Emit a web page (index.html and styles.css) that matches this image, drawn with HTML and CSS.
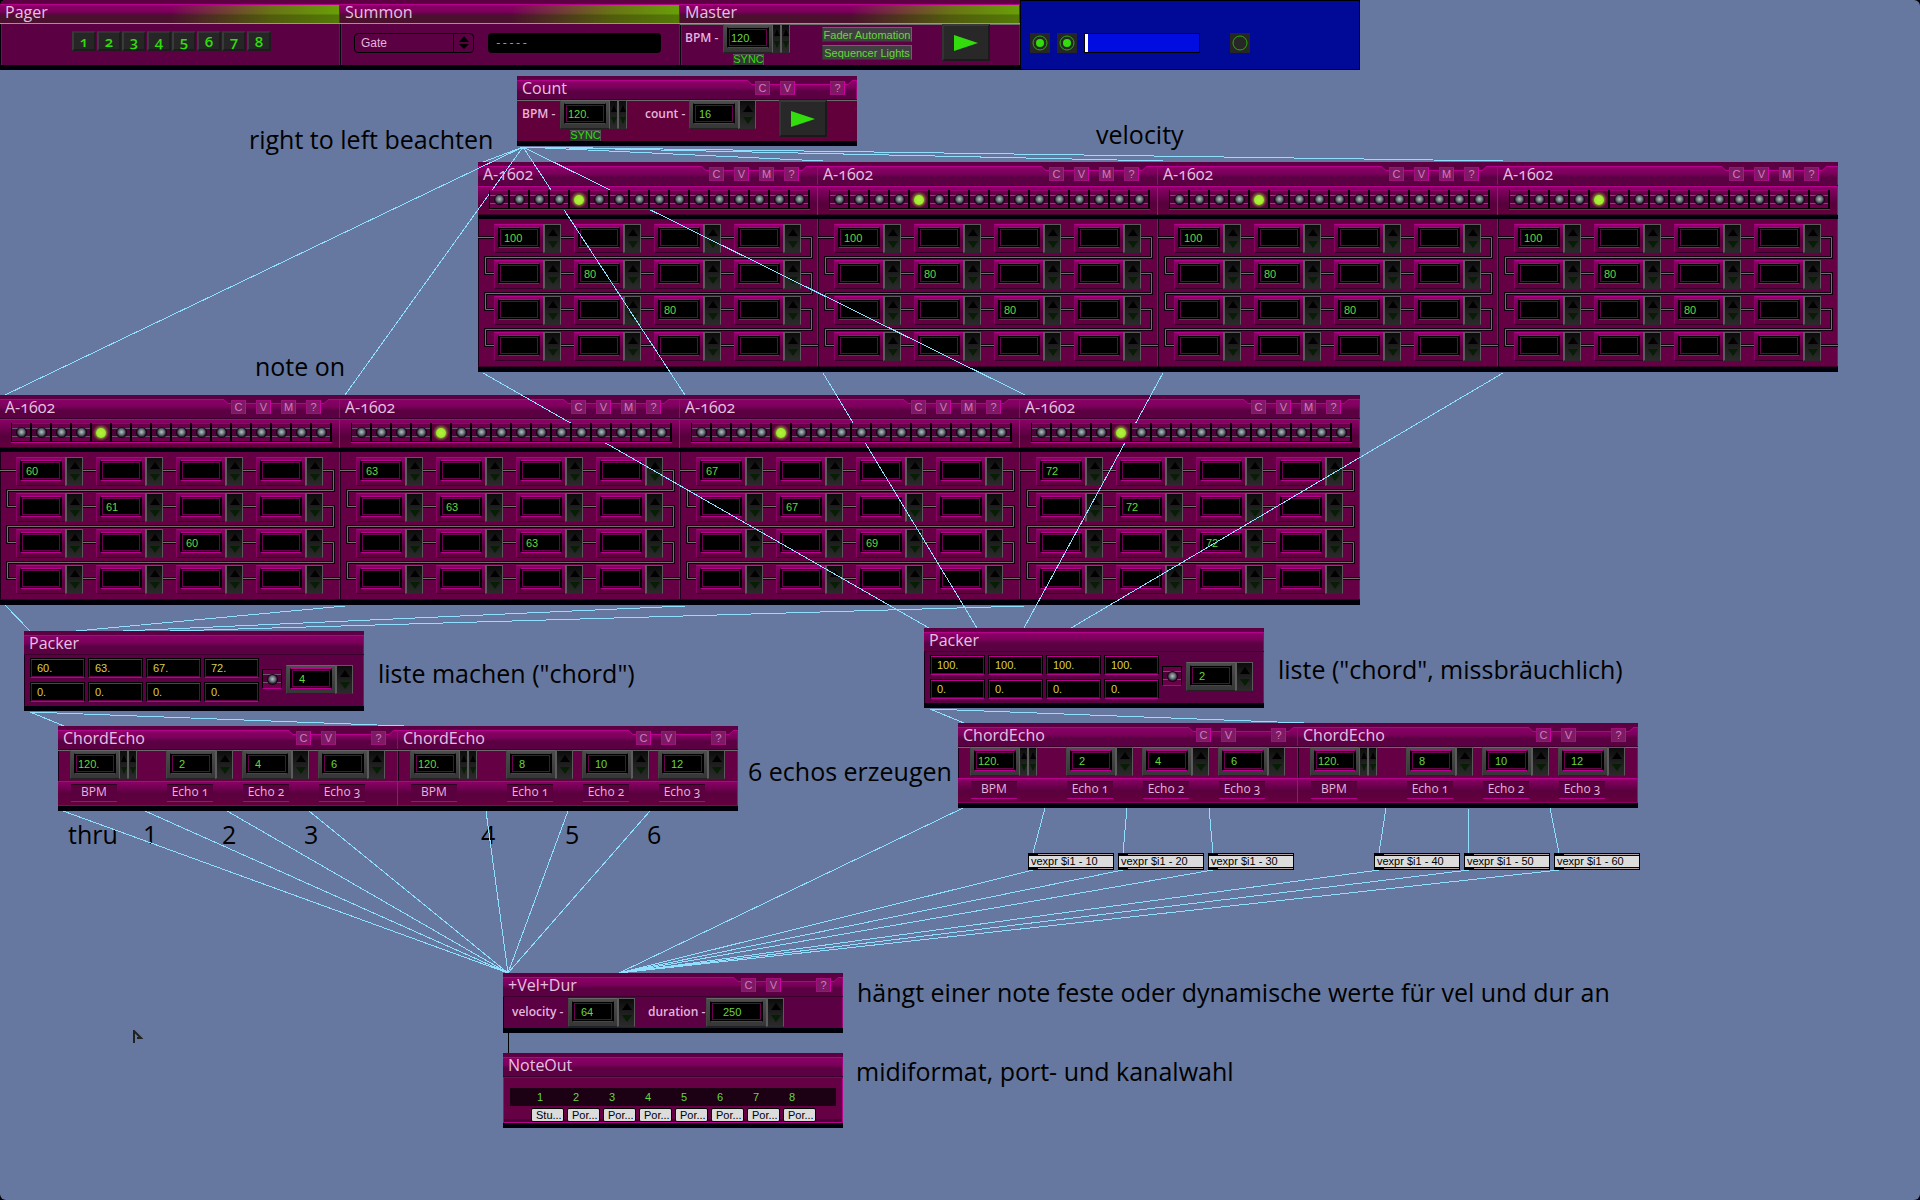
FILE: index.html
```html
<!DOCTYPE html>
<html lang="de">
<head>
<meta charset="utf-8">
<title>Patch</title>
<link rel="stylesheet" href="styles.css">
</head>
<body>
<main class="patch">

  <div class="node rack rack-top">
    <section class="module top">
      <header class="head"><h2>Pager</h2></header>
      <div class="body pager">
        <button class="page">1</button><button class="page">2</button><button class="page">3</button><button class="page">4</button><button class="page">5</button><button class="page">6</button><button class="page">7</button><button class="page">8</button>
      </div>
    </section>
    <section class="module top">
      <header class="head"><h2>Summon</h2></header>
      <div class="body summon">
        <div class="picker">
          <select class="gate" aria-label="Module"><option>Gate</option></select>
          <svg class="updown" viewBox="0 0 10 14" width="10" height="14" aria-hidden="true"><path d="M5 0L10 6H0zM5 13L10 8H0z"/></svg>
        </div>
        <input class="slot" aria-label="Slot" value="-----">
      </div>
    </section>
    <section class="module top">
      <header class="head"><h2>Master</h2></header>
      <div class="body transport">
        <label for="master-bpm">BPM -</label>
        <div class="tempo">
          <div class="num gray tight" data-steppers="2"><input id="master-bpm" value="120."></div>
          <button class="sync">SYNC</button>
        </div>
        <div class="options">
          <button class="option">Fader Automation</button>
          <button class="option">Sequencer Lights</button>
        </div>
        <button class="play" aria-label="Play"><svg viewBox="0 0 24 16" width="24" height="16"><path d="M0 0L24 8L0 16z"/></svg></button>
      </div>
    </section>
    <section class="module recorder">
      <button class="round" aria-label="Record"><svg viewBox="0 0 20 20" width="20" height="20"><ellipse class="ring" cx="10" cy="10" rx="7" ry="7"/><circle class="dot" cx="10" cy="10" r="4"/></svg></button>
      <button class="round" aria-label="Loop"><svg viewBox="0 0 20 20" width="20" height="20"><ellipse class="ring" cx="10" cy="10" rx="7" ry="7"/><circle class="dot" cx="10" cy="10" r="4"/></svg></button>
      <input class="position" type="range" min="0" max="100" value="0" aria-label="Position">
      <button class="round last" aria-label="Off"><svg viewBox="0 0 20 20" width="20" height="20"><ellipse class="ring" cx="10" cy="10" rx="7" ry="7"/></svg></button>
    </section>
  </div>

  <section class="node module count">
    <header class="head" data-tabs="CV?"><h2>Count</h2></header>
    <div class="body transport">
      <label for="count-bpm">BPM -</label>
      <div class="tempo">
        <div class="num gray tight" data-steppers="2"><input id="count-bpm" value="120."></div>
        <button class="sync">SYNC</button>
      </div>
      <label class="second" for="count-n">count -</label>
      <div class="num gray"><input id="count-n" value="16"></div>
      <button class="play" aria-label="Play"><svg viewBox="0 0 24 16" width="24" height="16"><path d="M0 0L24 8L0 16z"/></svg></button>
    </div>
  </section>

  <div class="node rack rack-velocity">
    <section class="module seq" data-steps="100,80,80"></section>
    <section class="module seq" data-steps="100,80,80"></section>
    <section class="module seq" data-steps="100,80,80"></section>
    <section class="module seq" data-steps="100,80,80"></section>
  </div>

  <div class="node rack rack-notes">
    <section class="module seq" data-steps="60,61,60"></section>
    <section class="module seq" data-steps="63,63,63"></section>
    <section class="module seq" data-steps="67,67,69"></section>
    <section class="module seq" data-steps="72,72,72"></section>
  </div>

  <section class="node module packer packer-notes">
    <header class="head"><h2>Packer</h2></header>
    <div class="body">
      <div class="list">
        <input aria-label="Item 1" value="60."><input aria-label="Item 2" value="63."><input aria-label="Item 3" value="67."><input aria-label="Item 4" value="72.">
        <input aria-label="Item 5" value="0."><input aria-label="Item 6" value="0."><input aria-label="Item 7" value="0."><input aria-label="Item 8" value="0.">
      </div>
      <button class="led" aria-label="Send"></button>
      <div class="num gray wide"><input aria-label="Length" value="4"></div>
    </div>
  </section>

  <section class="node module packer packer-velocity">
    <header class="head"><h2>Packer</h2></header>
    <div class="body">
      <div class="list">
        <input aria-label="Item 1" value="100."><input aria-label="Item 2" value="100."><input aria-label="Item 3" value="100."><input aria-label="Item 4" value="100.">
        <input aria-label="Item 5" value="0."><input aria-label="Item 6" value="0."><input aria-label="Item 7" value="0."><input aria-label="Item 8" value="0.">
      </div>
      <button class="led" aria-label="Send"></button>
      <div class="num gray wide"><input aria-label="Length" value="2"></div>
    </div>
  </section>

  <div class="node rack echo-notes">
    <section class="module echo" data-values="120.,2,4,6"></section>
    <section class="module echo" data-values="120.,8,10,12"></section>
  </div>
  <div class="node rack echo-velocity">
    <section class="module echo" data-values="120.,2,4,6"></section>
    <section class="module echo" data-values="120.,8,10,12"></section>
  </div>

  <div class="node exprs exprs-a">
    <div class="expr">vexpr $i1 - 10</div><div class="expr">vexpr $i1 - 20</div><div class="expr">vexpr $i1 - 30</div>
  </div>
  <div class="node exprs exprs-b">
    <div class="expr">vexpr $i1 - 40</div><div class="expr">vexpr $i1 - 50</div><div class="expr">vexpr $i1 - 60</div>
  </div>

  <section class="node module veldur">
    <header class="head" data-tabs="CV?"><h2>+Vel+Dur</h2></header>
    <div class="body">
      <label for="vel">velocity -</label>
      <div class="num gray wide"><input id="vel" value="64"></div>
      <label for="dur" class="second">duration -</label>
      <div class="num gray long"><input id="dur" value="250"></div>
    </div>
  </section>

  <section class="node module noteout">
    <header class="head"><h2>NoteOut</h2></header>
    <div class="body">
      <div class="channels"><label for="p1">1</label><label for="p2">2</label><label for="p3">3</label><label for="p4">4</label><label for="p5">5</label><label for="p6">6</label><label for="p7">7</label><label for="p8">8</label></div>
      <div class="ports">
        <select id="p1"><option>Stu...</option></select><select id="p2"><option>Por...</option></select><select id="p3"><option>Por...</option></select><select id="p4"><option>Por...</option></select><select id="p5"><option>Por...</option></select><select id="p6"><option>Por...</option></select><select id="p7"><option>Por...</option></select><select id="p8"><option>Por...</option></select>
      </div>
    </div>
  </section>

  <p class="node note n-order">right to left beachten</p>
  <p class="node note n-velocity">velocity</p>
  <p class="node note n-noteon">note on</p>
  <p class="node note n-list">liste machen ("chord")</p>
  <p class="node note n-list2">liste ("chord", missbräuchlich)</p>
  <p class="node note n-echo">6 echos erzeugen</p>
  <p class="node note n-thru">thru</p>
  <p class="node note n-1">1</p>
  <p class="node note n-2">2</p>
  <p class="node note n-3">3</p>
  <p class="node note n-4">4</p>
  <p class="node note n-5">5</p>
  <p class="node note n-6">6</p>
  <p class="node note n-veldur">hängt einer note feste oder dynamische werte für vel und dur an</p>
  <p class="node note n-out">midiformat, port- und kanalwahl</p>

  <svg class="cables" aria-hidden="true">
    <!-- clock to both sequencer rows -->
    <path d="M523 147L5 395M523 147L345 395M523 147L685 395M523 147L1025 395M523 147L483 162M523 147L823 161M523 147L1163 161M523 147L1503 161"/>
    <!-- sequencers to packers -->
    <path d="M483 373L929 628M823 373L977 628M1163 373L1024 628M1503 373L1071 628"/>
    <path d="M5 605L30 631M345 606L76 631M685 606L123 631M1025 606L170 631"/>
    <!-- packers to echoes -->
    <path d="M30 712L64 726M30 712L404 726M930 709L964 723M930 709L1304 723"/>
    <!-- echoes to velocity / duration -->
    <path d="M63 811L508 973M145 811L508 973M227 811L508 973M309 811L508 973M486 811L508 973M568 811L508 973M650 811L508 973"/>
    <path d="M963 808L619 973M1045 808L1033 853M1127 808L1123 853M1209 808L1213 853M1386 808L1379 853M1468 808L1469 853M1550 808L1559 853"/>
    <path d="M1033 870L619 973M1123 870L619 973M1213 870L619 973M1379 870L619 973M1469 870L619 973M1559 870L619 973"/>
    <path class="out" d="M508 1033V1053"/>
  </svg>
  <svg class="node pointer" viewBox="0 0 10 14" width="10" height="14" aria-hidden="true"><path d="M1 13V1L8 8H4"/></svg>
</main>
<script src="patch.js"></script>
</body>
</html>
```
FILE: patch.js
```js
const stepper = '<span class="stepper"><button aria-label="Up"></button><button aria-label="Down"></button></span>';

function head(title, tabs) {
  return `<header class="head" data-tabs="${tabs}"><h2>${title}</h2></header>`;
}

document.querySelectorAll('.seq').forEach(el => {
  const values = el.dataset.steps.split(',');
  let leds = '', cells = '';
  for (let i = 0; i < 16; i++) {
    leds += `<button class="led${i === 4 ? ' on' : ''}" aria-label="Step ${i + 1}"></button>`;
    // the three values sit on the diagonal of the 4 x 4 grid
    const value = i % 5 === 0 && i < 15 ? values[i / 5] : '';
    cells += `<div class="num"><input aria-label="Value ${i + 1}" value="${value}"></div>`;
  }
  el.innerHTML = head('A-1602', 'CVM?') +
    `<div class="lights"><div class="tray">${leds}</div></div>
     <div class="body"><svg class="wire" width="340" height="148" viewBox="0 0 340 148">
     ${['shade', 'core'].map(c => `<path class="${c}" d="M0 18.5H333.5V38.5H7.5V54.5H333.5V74.5H7.5V90.5H333.5V110.5H7.5V126.5H340"/>`).join('')}
     </svg><div class="cells">${cells}</div></div>`;
});

document.querySelectorAll('.echo').forEach(el => {
  const names = ['BPM', 'Echo 1', 'Echo 2', 'Echo 3'];
  const nums = el.dataset.values.split(',').map((v, i) =>
    `<div class="num gray ${i ? 'wide' : 'tight'}" data-steppers="${i ? 1 : 2}"><input aria-label="${names[i]}" value="${v}"></div>`).join('');
  el.innerHTML = head('ChordEcho', 'CV?') +
    `<div class="body"><div class="row">${nums}</div></div>
     <div class="captions row">${names.map(n => `<span>${n}</span>`).join('')}</div>`;
});

document.querySelectorAll('.num').forEach(el => {
  el.querySelector('input').insertAdjacentHTML('beforebegin', '<span class="face"></span>');
  el.querySelector('.face').append(el.querySelector('input'));
  const n = Number(el.dataset.steppers || 1);
  if (n === 2) el.classList.add('double');
  el.insertAdjacentHTML('beforeend', stepper.repeat(n));
});

document.querySelectorAll('.head[data-tabs]').forEach(el => {
  const tabs = [...el.dataset.tabs].map(t => `<button>${t}</button>`).join('');
  el.insertAdjacentHTML('beforeend',
    `<div class="tabs"><svg width="106" height="6" viewBox="0 0 106 6"><path d="M0 0L5 4.5H101L106 0"/></svg>${tabs}</div>`);
});
```
FILE: styles.css
```css
:root {
  --pink: #b8008f;
  --plum: #640043;
  --green: #68d63e;
  --title: "Open Sans", "Noto Sans", sans-serif;
  --small: "Liberation Sans", Arial, sans-serif;
}
* { box-sizing: border-box; }
body { margin: 0; background: #000; }
button, input, select { margin: 0; padding: 0; border: 0; border-radius: 0; background: none; font: 11px/12px var(--small); color: inherit; outline: 0; appearance: none; }
button { display: flex; align-items: center; justify-content: center; }

.patch { position: relative; min-height: 100vh; min-width: 1860px; background: #6678a0; border-radius: 6px; overflow: hidden; }
.node { position: absolute; }
.rack { display: flex; }
.cables { position: absolute; inset: 0; width: 100%; height: 100%; z-index: 1; pointer-events: none; fill: none; stroke: #8fe0ff; shape-rendering: crispEdges; }
.cables .out { stroke: #000; }

/* positions on the canvas */
.rack-top { left: 0; top: 0; }
.count { left: 517px; top: 76px; }
.rack-velocity { left: 478px; top: 162px; }
.rack-notes { left: 0; top: 395px; }
.packer-notes { left: 24px; top: 631px; }
.packer-velocity { left: 924px; top: 628px; }
.echo-notes { left: 58px; top: 726px; }
.echo-velocity { left: 958px; top: 723px; }
.exprs-a { left: 1028px; top: 853px; }
.exprs-b { left: 1374px; top: 853px; }
.veldur { left: 503px; top: 973px; }
.noteout { left: 503px; top: 1053px; }
.pointer { left: 133px; top: 1030px; fill: none; stroke: #222; stroke-width: 2; }

/* comments */
.note { margin: 0; font: 25px/30px var(--title); color: #000; white-space: nowrap; }
.n-order { left: 249px; top: 124px; }
.n-velocity { left: 1096px; top: 119px; }
.n-noteon { left: 255px; top: 351px; }
.n-list { left: 378px; top: 658px; }
.n-list2 { left: 1278px; top: 654px; }
.n-echo { left: 748px; top: 756px; }
.n-thru, .n-1, .n-2, .n-3, .n-4, .n-5, .n-6 { top: 819px; }
.n-thru { left: 68px; }
.n-1 { left: 143px; }
.n-2 { left: 222px; }
.n-3 { left: 304px; }
.n-4 { left: 481px; }
.n-5 { left: 565px; }
.n-6 { left: 647px; }
.n-veldur { left: 857px; top: 977px; }
.n-out { left: 856px; top: 1056px; }

/* module frame */
.module { width: 340px; background: var(--plum); border-bottom: 5px solid #00000a; box-shadow: inset 1px 0 #1a0018, inset -1px 0 #a0007a; color: #e6b4dc; }
.head { height: 24px; padding-left: 5px; display: flex; justify-content: space-between; border-top: 4px solid #5c0043; border-bottom: 1px solid #3c002c; background: linear-gradient(#8c0069, #7a005a 40%, #5a0043 60%, #5a0043); box-shadow: inset 0 1px var(--pink), inset -1px 0 #a0007a; }
.head h2 { margin: 0; font: 16px/17px var(--title); font-variant-numeric: oldstyle-nums; color: #e8c0e0; }
.tabs { position: relative; width: 106px; height: 15px; margin-right: 4px; padding: 1px 8px 0; display: flex; gap: 10px; }
.tabs svg { position: absolute; left: 0; top: 0; fill: #5c0043; stroke: var(--pink); }
.tabs button { position: relative; width: 15px; height: 14px; background: #7d1a64; border: 1px solid #a0107c; border-right-color: #d000a8; color: #d878c0; }
.tabs button:last-child { margin-left: auto; }

/* top bar */
.top { height: 70px; background: #5a0043; box-shadow: inset 1px 0 #00000a, inset 2px 0 #8a0066, inset -1px 0 #8a0066; }
.top .head { border-bottom-color: #7fc000; background: linear-gradient(#0000 50%, #2a300055 60%), linear-gradient(90deg, #6a960000 50%, #66850add 80%, #68a008), linear-gradient(#8c0069, #7a005a 40%, #5a0043 60%, #5a0043); }
.pager { display: flex; gap: 1px; padding: 7px 0 0 72px; }
.page { width: 24px; height: 20px; background: #262626; border: 2px solid #1c1c1c; border-top-color: #333; border-left-color: #3a3a3a; font: 600 15px/16px var(--title); font-variant-numeric: oldstyle-nums; color: #33dc0c; }
.summon { display: flex; gap: 14px; padding: 9px 0 0 14px; }
.picker { position: relative; width: 120px; }
.gate { width: 100%; height: 20px; padding-left: 6px; border: 1px solid #000; border-radius: 4px; font-size: 12px; }
.updown { position: absolute; right: 0; top: 1px; width: 21px; height: 18px; padding: 2px 5px; border-left: 1px solid #000; fill: #000; }
.slot { width: 173px; height: 20px; padding-left: 7px; background: #000; border-radius: 4px; color: var(--green); font-family: "Liberation Mono", monospace; }
.recorder { display: flex; height: 70px; padding: 32px 0 0 9px; background: #000a96; border: 1px solid #000; box-shadow: none; }
.round { width: 20px; height: 20px; margin-right: 7px; background: #262626; }
.ring { fill: none; stroke: #2aa80c; }
.dot { fill: #33dc0c; }
.position { width: 116px; height: 20px; background: #000ce0; border: 1px solid #000; }
.position::-webkit-slider-thumb { appearance: none; width: 3px; height: 18px; background: #fff; }
.round.last { margin: 0 0 0 30px; }

/* number boxes */
.num { display: flex; height: 29px; }
.face { width: 49px; padding: 2px 0 0 3px; border: 1px solid #8a0066; border-top-color: var(--pink); border-right: 0; border-bottom-color: #33002a; background: linear-gradient(#8a0066, #5a003e 60%, #62003f); }
.face input { display: block; width: 42px; height: 21px; padding-left: 5px; background: #000; border: 1px solid var(--pink); border-left-color: #000; border-right-color: #000; box-shadow: inset 0 0 0 1px #000, inset 0 0 0 2px #6c0050; color: var(--green); }
.gray .face { border-color: #666 #222 #222 #444; background: linear-gradient(#4c4c4c, #363636); }
.tight .face input { padding-left: 3px; }
.wide .face input { padding-left: 8px; }
.long .face { width: 60px; }
.long .face input { width: 53px; padding-left: 12px; }
.stepper { width: 18px; display: flex; flex-direction: column; justify-content: space-around; padding: 1px 0; border: 1px solid #5a5a5a; border-left: 2px solid #5c5c5c; border-bottom-color: #2a2a2a; background: linear-gradient(#0c0c0c, #202020 55%, #2a2a2a); }
.stepper button::before { content: ""; border: 5px solid #0000; border-top: 0; border-bottom: 7px solid #000; }
.stepper button + button::before { border-bottom: 0; border-top: 7px solid #061e04; }
.double .stepper { width: 9px; border-left-width: 1px; }
.double .stepper button::before { border-left-width: 3px; border-right-width: 3px; }

/* transport rows */
.transport { display: flex; height: 41px; padding-left: 5px; box-shadow: inset 0 1px #6a6a6a; }
.module label { font: 600 12px/27px var(--title); white-space: nowrap; }
.transport label { width: 38px; }
.transport .second { width: 44px; margin-left: 18px; }
.tempo { width: 67px; }
.sync { width: 31px; height: 11px; margin: 1px 0 0 10px; background: #353535; color: #33dc0c; line-height: 11px; box-shadow: inset -1px 1px #555; }
.options { width: 90px; margin-left: 32px; padding-top: 3px; display: flex; flex-direction: column; gap: 3px; }
.option { height: 15px; background: #404040; border: 1px solid #343434; border-top-color: #666; border-right-color: #666; color: var(--green); white-space: nowrap; }
.play { width: 48px; height: 37px; margin-left: auto; margin-right: 30px; background: #282828; border: 2px solid #1a1a1a; border-top-color: #383838; border-left-color: #333; fill: #33dc0c; }
.count .body { background: #62003c; }

/* sequencer */
.lights { height: 29px; padding: 3px 0 0 11px; border-top: 1px solid var(--pink); background: linear-gradient(#8a0066, #56003c 60%, #66003e); box-shadow: inset -1px 0 var(--pink), inset 0 -1px #3a0028; }
.tray { position: relative; z-index: 2; display: flex; width: 321px; height: 20px; background: #000; border-bottom: 1px solid var(--pink); padding: 0 0 1px 1px; gap: 2px; }
.led { position: relative; width: 18px; height: 18px; background: linear-gradient(#0000 4px, #6a566a 4px 5px, #50003a 5px 12px, #6a566a 12px 13px, #0000 13px), #6a004a; border-top: 1px solid #980070; }
.led::before { content: ""; width: 9px; height: 9px; border-radius: 50%; background: radial-gradient(circle at 50% 45%, #b8c0c8, #606870 45%, #18181c 72%); box-shadow: 0 0 0 1px #180014; }
.led.on { background: radial-gradient(circle, #90a030, #5c003c 70%); }
.led.on::before { width: 10px; height: 10px; background: radial-gradient(#b4f040, #90e820); box-shadow: 0 0 3px #a0e040; }
.seq .tabs { margin-right: 11px; }
.seq .body { position: relative; height: 152px; padding: 5px 16px 0; border-top: 4px solid #00000a; box-shadow: inset 0 -1px #3a0028; }
.wire { position: absolute; left: 0; top: 0; fill: none; }
.wire .shade { stroke: #100010; stroke-width: 3; }
.wire .core { stroke: #70706a; }
.cells { position: relative; display: grid; grid-template-columns: repeat(4, 67px); column-gap: 13px; row-gap: 7px; }

/* packer */
.packer { background: #5a0043; }
.packer .body { display: flex; height: 51px; padding: 3px 0 0 6px; }
.list { display: grid; grid-template-columns: repeat(4, 55px); gap: 4px 3px; width: 232px; align-content: start; }
.list input { width: 55px; height: 20px; padding-left: 6px; background: #000; border: 1px solid #000; border-bottom-color: var(--pink); box-shadow: inset 0 1px var(--pink), inset 0 0 0 1px #6c0050; color: #d8d04c; }
.packer .led { width: 20px; height: 20px; margin-top: 11px; border: 1px solid #000; border-bottom-color: var(--pink); }
.packer .num { margin: 7px 0 0 4px; }

/* chord echo */
.row { display: grid; grid-template-columns: 96px 76px 76px 67px; }
.echo .body { height: 31px; padding-left: 12px; box-shadow: inset 0 1px #6a6a6a; }
.echo .captions { height: 25px; padding: 2px 0 0 13px; border: 1px solid var(--pink); border-left: 0; border-bottom-color: #8a0066; background: linear-gradient(#8a0066, #5a003e 50%, #66003e); }
.captions span { width: 46px; height: 18px; border-top: 1px solid #28001c; border-bottom: 1px solid var(--pink); background: #5a003e; text-align: center; font: 12px/14px var(--title); font-variant-numeric: oldstyle-nums; }

/* message boxes */
.exprs { display: flex; gap: 4px; }
.expr { width: 86px; height: 17px; padding-left: 2px; border: 1px solid #000; background: linear-gradient(90deg, #000 9px, #b0a0a0 9px) 0 0 / 100% 1px no-repeat, linear-gradient(#000, #000) 0 1px / 100% 1px no-repeat, linear-gradient(90deg, #000 9px, #b0a0a0 9px) 0 100% / 100% 1px no-repeat, linear-gradient(#000, #000) 0 13px / 100% 1px no-repeat, #dcdcdc; font: 11px/15px var(--small); white-space: nowrap; color: #000; }

/* velocity / duration */
.veldur { background: #5a0043; }
.veldur .body { display: flex; height: 31px; padding: 1px 0 0 9px; }
.veldur label { width: 56px; }
.veldur .second { width: 58px; margin-left: 13px; }

/* note out */
.noteout .body { height: 46px; padding: 10px 6px 0; border: 1px solid var(--pink); border-top-color: #8a0066; box-shadow: inset 0 -3px #4a0034; }
.channels { display: flex; height: 18px; padding-left: 20px; background: #1c0014; }
.channels label { width: 36px; padding-left: 7px; font: 11px/18px var(--small); color: var(--green); }
.ports { display: flex; gap: 3px; padding: 2px 0 0 21px; }
.ports select { width: 33px; height: 14px; padding-left: 4px; background: #dcdcdc; border: 1px solid #000; border-radius: 2px; color: #000; }
```
